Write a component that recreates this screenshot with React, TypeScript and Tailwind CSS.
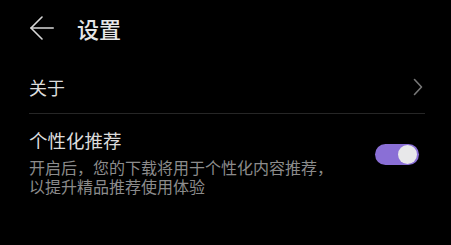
import { useState } from 'react';

export default function App() {
  const [enabled, setEnabled] = useState(true);

  return (
    <div
      className="w-[451px] h-[245px] bg-black overflow-hidden"
      style={{ fontFamily: '"Noto Sans CJK SC", "Noto Sans", sans-serif' }}
    >
      {/* header */}
      <div className="flex items-center h-[54px] pl-[30px] pt-[1px]">
        <svg width="24" height="24" viewBox="0 0 24 24" fill="none" stroke="#d8d8d8" strokeWidth="1.6" strokeLinecap="round" strokeLinejoin="round">
          <path d="M23.2 12H1" />
          <path d="M12 1L1 12L12 23" />
        </svg>
        <h1 className="ml-[23px] text-[22px] leading-none font-medium text-[#e6e6e6]">设置</h1>
      </div>

      <div className="pl-[29px] pr-[26px]">
        {/* about row */}
        <div className="flex items-center justify-between h-[60px] pt-[7px] border-b border-[#262626]">
          <span className="text-[18px] text-[#dcdcdc]">关于</span>
          <svg className="mr-[2px]" width="10" height="18" viewBox="0 0 10 18" fill="none" stroke="#777" strokeWidth="1.6" strokeLinecap="round" strokeLinejoin="round">
            <path d="M1.5 1.5L8.5 9L1.5 16.5" />
          </svg>
        </div>

        {/* personalised recommendation */}
        <div className="flex items-start justify-between pt-[14px]">
          <div>
            <div className="text-[18.5px] leading-[24px] text-[#dcdcdc]">个性化推荐</div>
            <p className="mt-[6px] text-[16px] leading-[19px] text-[#8c8c8c]">
              开启后，您的下载将用于个性化内容推荐，
              <br />
              以提升精品推荐使用体验
            </p>
          </div>
          <button
            type="button"
            onClick={() => setEnabled(!enabled)}
            className={`relative mt-[16px] w-[44px] h-[21px] rounded-full mr-[6px] ${enabled ? 'bg-[#8a6fd6]' : 'bg-[#555]'}`}
          >
            <span
              className={`absolute top-[1px] w-[19px] h-[19px] rounded-full bg-[#e8e8ea] ${enabled ? 'right-[2px]' : 'left-[2px]'}`}
            />
          </button>
        </div>
      </div>
    </div>
  );
}
